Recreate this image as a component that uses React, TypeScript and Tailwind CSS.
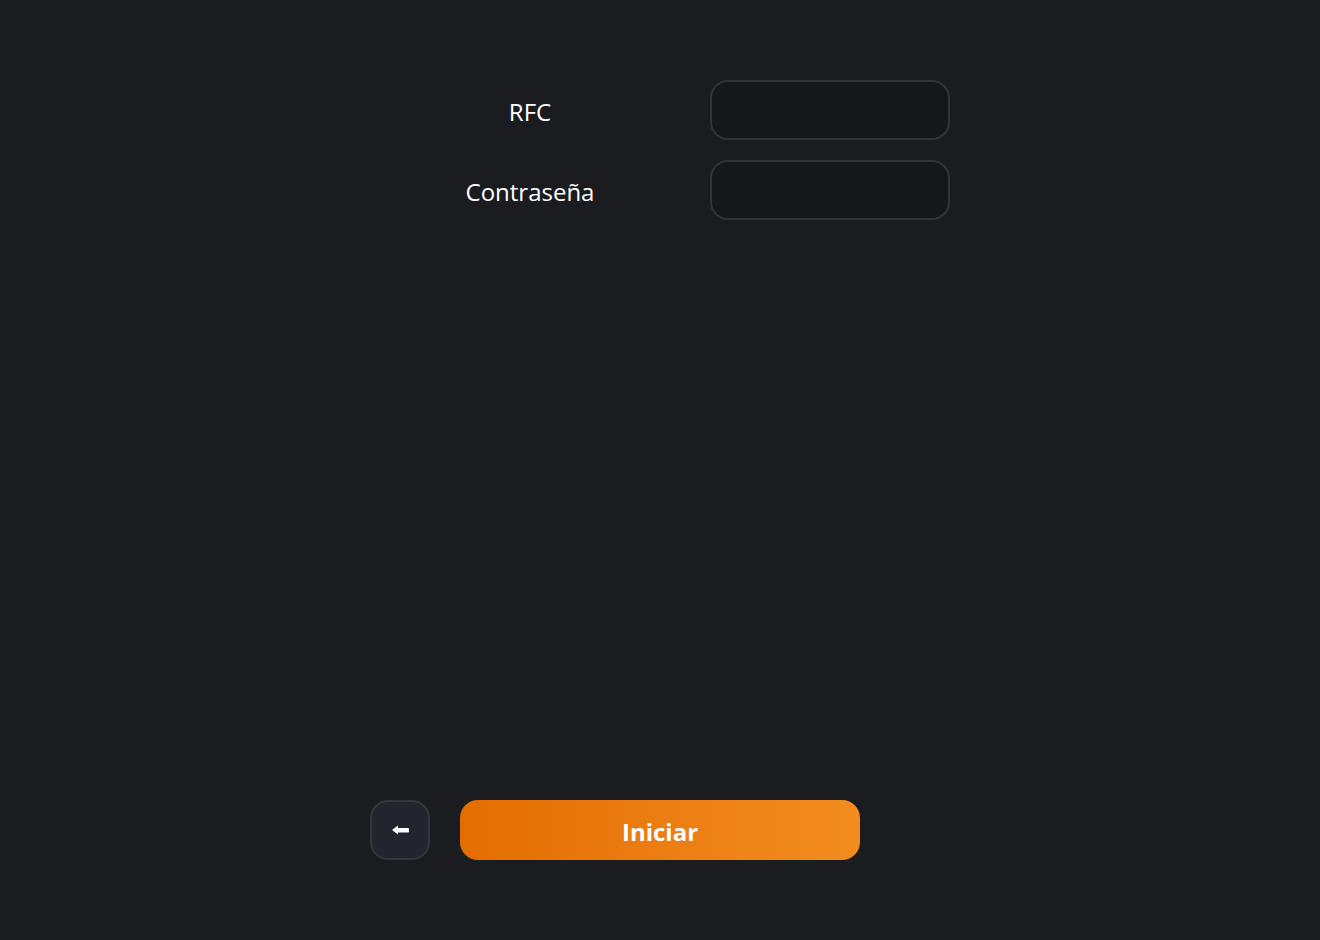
export default function App() {
  return (
    <div
      className="flex h-[940px] w-full flex-col items-center justify-between bg-[#1b1c20] py-20 text-white"
      style={{ fontFamily: '"Open Sans", "Noto Sans", sans-serif' }}
    >
      <div className="flex w-[580px] flex-col gap-5">
        <div className="flex items-center gap-5">
          <label className="w-[320px] pt-1 text-center text-2xl">RFC</label>
          <input
            type="text"
            className="h-[60px] w-[240px] rounded-[18px] border-2 border-[#32343c] bg-[#16171b] px-4 text-white outline-none"
          />
        </div>
        <div className="flex items-center gap-5">
          <label className="w-[320px] pt-1 text-center text-2xl">Contraseña</label>
          <input
            type="password"
            className="h-[60px] w-[240px] rounded-[18px] border-2 border-[#32343c] bg-[#16171b] px-4 text-white outline-none"
          />
        </div>
      </div>

      <div className="flex w-[580px] items-center gap-[30px]">
        <button
          type="button"
          className="flex h-[60px] w-[60px] items-center justify-center rounded-[18px] border-2 border-[#33363f] bg-[#22252e]"
        >
          <svg width="17" height="10" viewBox="0 0 17 10" fill="white">
            <polygon points="0,5 6,0.5 6,9.5" />
            <rect x="5" y="3" width="12" height="4.5" rx="1" />
          </svg>
        </button>
        <button
          type="button"
          className="h-[60px] w-[400px] rounded-[18px] bg-gradient-to-r from-[#e46d00] to-[#f38d1f] pt-1 text-2xl font-bold text-white"
        >
          Iniciar
        </button>
      </div>
    </div>
  );
}
